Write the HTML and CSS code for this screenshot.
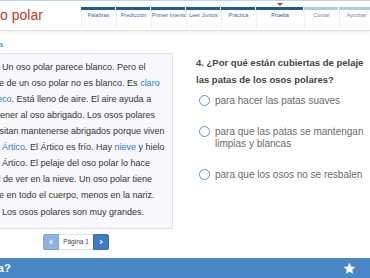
FILE: index.html
```html
<!doctype html>
<html lang="es">
    <head>
        <meta charset="UTF-8" />
        <title>El oso polar - Prueba</title>
        <link rel="stylesheet" href="styles.css">
    </head>
    <body>
        <header class="topbar">
            <h1 class="lesson-title">El oso polar</h1>
            <nav class="steps">
                <div class="step done"><span class="step-bar"></span><span class="step-label">Palabras</span></div>
                <div class="step done"><span class="step-bar"></span><span class="step-label">Predicción</span></div>
                <div class="step done"><span class="step-bar"></span><span class="step-label">Primer Intento</span></div>
                <div class="step done"><span class="step-bar"></span><span class="step-label">Leer Juntos</span></div>
                <div class="step done"><span class="step-bar"></span><span class="step-label">Práctica</span></div>
                <div class="step done current"><span class="step-bar"></span><span class="step-label">Prueba</span></div>
                <div class="step todo"><span class="step-bar"></span><span class="step-label">Contar</span></div>
                <div class="step todo"><span class="step-bar"></span><span class="step-label">Aprobar</span></div>
            </nav>
        </header>

        <main class="reader">
            <section class="passage-pane">
                <a href="#" class="back-link">Ver la lectura</a>
                <article class="passage">
                    <p>Un oso polar parece blanco. Pero el<br>pelaje de un oso polar no es blanco. Es <a href="#" class="word">claro</a><br>y <a href="#" class="word">hueco</a>. Está lleno de aire. El aire ayuda a<br>mantener al oso abrigado. Los osos polares<br>necesitan mantenerse abrigados porque viven<br>en el <a href="#" class="word">Ártico</a>. El Ártico es frío. Hay <a href="#" class="word">nieve</a> y hielo<br>en el Ártico. El pelaje del oso polar lo hace<br>difícil de ver en la nieve. Un oso polar tiene<br>pelaje en todo el cuerpo, menos en la nariz.</p>
                    <p>Los osos polares son muy grandes.</p>
                </article>
                <div class="pager">
                    <button class="pager-btn prev">&lsaquo;</button>
                    <span class="pager-label">Página 1</span>
                    <button class="pager-btn next">&rsaquo;</button>
                </div>
            </section>

            <section class="question-pane">
                <h2 class="question">4. ¿Por qué están cubiertas de pelaje las patas de los osos polares?</h2>
                <label class="option"><span class="radio"></span><span>para hacer las patas suaves</span></label>
                <label class="option"><span class="radio"></span><span>para que las patas se mantengan limpias y blancas</span></label>
                <label class="option"><span class="radio"></span><span>para que los osos no se resbalen</span></label>
            </section>
        </main>

        <footer class="help-bar">
            <span class="help-text">¿Necesitas ayuda?</span>
            <svg class="star" viewBox="0 0 24 24" width="13" height="13">
                <path d="M12 1.5l3.2 6.9 7.3.8-5.5 5 1.6 7.3L12 17.8 5.4 21.5 7 14.2 1.5 9.2l7.3-.8z" fill="#fff"/>
            </svg>
        </footer>
    </body>
</html>
```

FILE: styles.css
```css
:root {
    --text-color: #333;
    --muted-color: #6b6b6b;
    --title-red: #c0392b;
    --done-blue: #1f5a96;
    --todo-blue: #a9cdee;
    --link-blue: #2a7ad2;
    --bar-blue: #4a87c6;
    --panel-bg: #f8f8fc;
    --panel-border: #e1e3ea;
}

html,
body {
    height: 100%;
}

body {
    margin: 0;
    font-family: "Liberation Sans", Arial, sans-serif;
    color: var(--text-color);
    background: #fff;
    display: flex;
    flex-direction: column;
    overflow: hidden;
}

/* Header */
.topbar {
    height: 29px;
    display: flex;
    align-items: flex-start;
    border-top: 1px solid #bcd6ee;
    border-bottom: 1px solid #e2e2e2;
    box-shadow: 0 1px 2px rgba(0, 0, 0, 0.08);
    flex-shrink: 0;
}

.lesson-title {
    margin: 0 0 0 -31px;
    font-size: 14px;
    font-weight: normal;
    color: var(--title-red);
    line-height: 29px;
    white-space: nowrap;
}

.steps {
    display: flex;
    margin-left: auto;
    margin-right: -3px;
    padding-top: 6px;
    gap: 1px;
}

.step {
    position: relative;
    width: 34px;
    display: flex;
    flex-direction: column;
}

.step.current {
    width: 47px;
}

.step.current::before {
    content: "";
    position: absolute;
    top: -4px;
    left: 50%;
    margin-left: -3px;
    border-left: 3px solid transparent;
    border-right: 3px solid transparent;
    border-top: 3px solid #d0312d;
}

.step-bar {
    height: 3px;
    background: var(--done-blue);
}

.step.todo .step-bar {
    background: var(--todo-blue);
}

.step-label {
    height: 19px;
    padding-top: 2px;
    box-sizing: border-box;
    font-size: 5.5px;
    text-align: center;
    white-space: nowrap;
    color: #3b6a9a;
    border-left: 1px solid #f0f1f3;
}

.step.current .step-label {
    color: #1f4f80;
}

.step.todo .step-label {
    color: #8a8a8a;
}

/* Main */
.reader {
    flex: 1;
    display: flex;
    min-height: 0;
}

.passage-pane {
    width: 204px;
    margin-left: -31px;
    flex-shrink: 0;
    padding-top: 9px;
}

.back-link {
    display: block;
    width: 34px;
    text-align: right;
    white-space: nowrap;
    font-size: 8px;
    line-height: 10px;
    color: var(--link-blue);
    text-decoration: none;
    direction: rtl;
}

.passage {
    margin-top: 3px;
    background: var(--panel-bg);
    border: 1px solid var(--panel-border);
    padding: 5px 6px 8px 10px;
    font-size: 9px;
    line-height: 16px;
}

.passage p {
    margin: 0;
    text-indent: 22px;
    white-space: nowrap;
}

.passage p + p {
    margin-top: 1px;
}

.word {
    color: var(--link-blue);
    text-decoration: none;
}

.pager {
    display: flex;
    justify-content: center;
    margin-top: 5px;
    padding-left: 10px;
}

.pager-btn {
    width: 16px;
    height: 16px;
    border: 1px solid #3a73b0;
    padding: 0;
    font-family: "DejaVu Sans", sans-serif;
    font-weight: bold;
    font-size: 11px;
    line-height: 12px;
    color: #fff;
    background: #3b7cc4;
}

.pager-btn.prev {
    background: #8fb4dc;
    border-color: #82a8d2;
    border-radius: 2px 0 0 2px;
}

.pager-btn.next {
    border-radius: 0 2px 2px 0;
}

.pager-label {
    width: 34px;
    height: 16px;
    box-sizing: border-box;
    border-top: 1px solid #e4e4e4;
    border-bottom: 1px solid #e4e4e4;
    font-size: 6.5px;
    line-height: 14px;
    text-align: center;
    color: #444;
}

.question-pane {
    flex: 1;
    padding: 23px 6px 0 23px;
}

.question {
    margin: 0 0 7px;
    font-size: 9.5px;
    line-height: 17px;
    font-weight: bold;
    color: #444;
}

.option {
    display: flex;
    align-items: flex-start;
    gap: 5px;
    font-size: 10px;
    line-height: 12px;
    color: var(--muted-color);
    margin-bottom: 19px;
    margin-left: 3px;
}

.radio {
    width: 9px;
    height: 9px;
    flex-shrink: 0;
    margin-top: 0;
    border: 1.5px solid #5b93d3;
    border-radius: 50%;
}

/* Bottom bar */
.help-bar {
    height: 20px;
    flex-shrink: 0;
    display: flex;
    align-items: center;
    justify-content: space-between;
    background: var(--bar-blue);
    color: #fff;
    padding-right: 14px;
}

.help-text {
    margin-left: -89px;
    font-size: 11px;
    font-weight: bold;
    white-space: nowrap;
}

.star {
    display: block;
}
```
